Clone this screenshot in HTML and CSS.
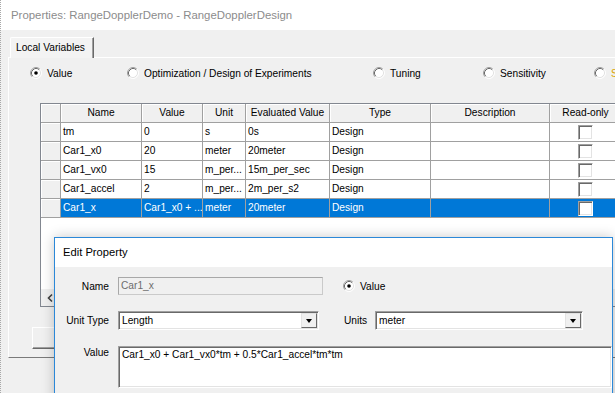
FILE: index.html
```html
<!DOCTYPE html>
<html>
<head>
<meta charset="utf-8">
<link rel="stylesheet" href="styles.css">
</head>
<body>
<div class="app">
  <div class="titlebar">Properties: RangeDopplerDemo - RangeDopplerDesign</div>
  <div class="tabstrip"><div class="tab">Local Variables</div></div>
  <div class="panel">
    <div class="radios">
      <div class="ropt"><svg class="radio" width="12" height="12" viewBox="0 0 12 12"><circle cx="6" cy="6" r="5" fill="#fff"/><path d="M2.11 9.89A5.5 5.5 0 0 1 9.89 2.11" fill="none" stroke="#a0a0a0"/><path d="M9.89 2.11A5.5 5.5 0 0 1 2.11 9.89" fill="none" stroke="#fff"/><path d="M2.82 9.18A4.5 4.5 0 0 1 9.18 2.82" fill="none" stroke="#696969"/><path d="M9.18 2.82A4.5 4.5 0 0 1 2.82 9.18" fill="none" stroke="#e3e3e3"/><circle cx="6" cy="6" r="1.8" fill="#000"/></svg><span>Value</span></div>
      <div class="ropt"><svg class="radio" width="12" height="12" viewBox="0 0 12 12"><circle cx="6" cy="6" r="5" fill="#fff"/><path d="M2.11 9.89A5.5 5.5 0 0 1 9.89 2.11" fill="none" stroke="#a0a0a0"/><path d="M9.89 2.11A5.5 5.5 0 0 1 2.11 9.89" fill="none" stroke="#fff"/><path d="M2.82 9.18A4.5 4.5 0 0 1 9.18 2.82" fill="none" stroke="#696969"/><path d="M9.18 2.82A4.5 4.5 0 0 1 2.82 9.18" fill="none" stroke="#e3e3e3"/></svg><span>Optimization / Design of Experiments</span></div>
      <div class="ropt"><svg class="radio" width="12" height="12" viewBox="0 0 12 12"><circle cx="6" cy="6" r="5" fill="#fff"/><path d="M2.11 9.89A5.5 5.5 0 0 1 9.89 2.11" fill="none" stroke="#a0a0a0"/><path d="M9.89 2.11A5.5 5.5 0 0 1 2.11 9.89" fill="none" stroke="#fff"/><path d="M2.82 9.18A4.5 4.5 0 0 1 9.18 2.82" fill="none" stroke="#696969"/><path d="M9.18 2.82A4.5 4.5 0 0 1 2.82 9.18" fill="none" stroke="#e3e3e3"/></svg><span>Tuning</span></div>
      <div class="ropt"><svg class="radio" width="12" height="12" viewBox="0 0 12 12"><circle cx="6" cy="6" r="5" fill="#fff"/><path d="M2.11 9.89A5.5 5.5 0 0 1 9.89 2.11" fill="none" stroke="#a0a0a0"/><path d="M9.89 2.11A5.5 5.5 0 0 1 2.11 9.89" fill="none" stroke="#fff"/><path d="M2.82 9.18A4.5 4.5 0 0 1 9.18 2.82" fill="none" stroke="#696969"/><path d="M9.18 2.82A4.5 4.5 0 0 1 2.82 9.18" fill="none" stroke="#e3e3e3"/></svg><span>Sensitivity</span></div>
      <div class="ropt"><svg class="radio" width="12" height="12" viewBox="0 0 12 12"><circle cx="6" cy="6" r="5" fill="#fff"/><path d="M2.11 9.89A5.5 5.5 0 0 1 9.89 2.11" fill="none" stroke="#a0a0a0"/><path d="M9.89 2.11A5.5 5.5 0 0 1 2.11 9.89" fill="none" stroke="#fff"/><path d="M2.82 9.18A4.5 4.5 0 0 1 9.18 2.82" fill="none" stroke="#696969"/><path d="M9.18 2.82A4.5 4.5 0 0 1 2.82 9.18" fill="none" stroke="#e3e3e3"/></svg><span class="orange">Statistical</span></div>
    </div>

    <div class="grid">
      <div class="row head">
        <div class="c rh"></div>
        <div class="c">Name</div>
        <div class="c">Value</div>
        <div class="c">Unit</div>
        <div class="c">Evaluated Value</div>
        <div class="c">Type</div>
        <div class="c">Description</div>
        <div class="c">Read-only</div>
      </div>
      <div class="row">
        <div class="c rh"></div>
        <div class="c">tm</div>
        <div class="c">0</div>
        <div class="c">s</div>
        <div class="c">0s</div>
        <div class="c">Design</div>
        <div class="c"></div>
        <div class="c ck"><div class="box"></div></div>
      </div>
      <div class="row">
        <div class="c rh"></div>
        <div class="c">Car1_x0</div>
        <div class="c">20</div>
        <div class="c">meter</div>
        <div class="c">20meter</div>
        <div class="c">Design</div>
        <div class="c"></div>
        <div class="c ck"><div class="box"></div></div>
      </div>
      <div class="row">
        <div class="c rh"></div>
        <div class="c">Car1_vx0</div>
        <div class="c">15</div>
        <div class="c">m_per...</div>
        <div class="c">15m_per_sec</div>
        <div class="c">Design</div>
        <div class="c"></div>
        <div class="c ck"><div class="box"></div></div>
      </div>
      <div class="row">
        <div class="c rh"></div>
        <div class="c">Car1_accel</div>
        <div class="c">2</div>
        <div class="c">m_per...</div>
        <div class="c">2m_per_s2</div>
        <div class="c">Design</div>
        <div class="c"></div>
        <div class="c ck"><div class="box"></div></div>
      </div>
      <div class="row sel">
        <div class="c rh"></div>
        <div class="c">Car1_x</div>
        <div class="c">Car1_x0 + ...</div>
        <div class="c">meter</div>
        <div class="c">20meter</div>
        <div class="c">Design</div>
        <div class="c"></div>
        <div class="c ck"><div class="box"></div></div>
      </div>
      <div class="empty"></div>
      <div class="hscroll">
        <div class="sbtn"><svg width="8" height="10" viewBox="0 0 8 10"><path d="M6 1.5L2.5 5L6 8.5" fill="none" stroke="#404040" stroke-width="1.6"/></svg></div>
      </div>
    </div>

    <div class="btn"></div>
  </div>

  <div class="dialog">
    <div class="dtitle">Edit Property</div>
    <div class="dbody">
      <div class="drow">
        <div class="dl">Name</div>
        <div class="name-input">Car1_x</div>
        <div class="dradio"><svg class="radio" width="12" height="12" viewBox="0 0 12 12"><circle cx="6" cy="6" r="5" fill="#fff"/><path d="M2.11 9.89A5.5 5.5 0 0 1 9.89 2.11" fill="none" stroke="#a0a0a0"/><path d="M9.89 2.11A5.5 5.5 0 0 1 2.11 9.89" fill="none" stroke="#fff"/><path d="M2.82 9.18A4.5 4.5 0 0 1 9.18 2.82" fill="none" stroke="#696969"/><path d="M9.18 2.82A4.5 4.5 0 0 1 2.82 9.18" fill="none" stroke="#e3e3e3"/><circle cx="6" cy="6" r="1.8" fill="#000"/></svg><span>Value</span></div>
      </div>
      <div class="drow r2">
        <div class="dl">Unit Type</div>
        <div class="combo unit-type"><div class="txt">Length</div><div class="dd"><div class="tri"></div></div></div>
        <div class="units-label">Units</div>
        <div class="combo units"><div class="txt">meter</div><div class="dd"><div class="tri"></div></div></div>
      </div>
      <div class="drow r3">
        <div class="dl">Value</div>
        <div class="ta">Car1_x0 + Car1_vx0*tm + 0.5*Car1_accel*tm*tm</div>
      </div>
    </div>
  </div>
</div>
</body>
</html>
```
FILE: styles.css
```css
* { box-sizing: border-box; }
body {
  margin: 0;
  font-family: "Liberation Sans", Arial, sans-serif;
  font-size: 10.2px;
  color: #000;
}
.app {
  position: relative;
  width: 615px;
  height: 393px;
  overflow: hidden;
  background: repeating-linear-gradient(to bottom, #a8a8a8 0 1px, transparent 1px 2px) left top / 1px 100% no-repeat, #f0f0f0;
}
.titlebar {
  height: 30px;
  background: repeating-linear-gradient(to bottom, #a8a8a8 0 1px, transparent 1px 2px) left top / 1px 100% no-repeat, #fff;
  color: #8c8c8c;
  font-size: 11.4px;
  line-height: 30px;
  padding-left: 11px;
  white-space: nowrap;
}
.tabstrip {
  height: 27px;
  padding: 7px 0 0 10px;
}
.tab {
  position: relative;
  z-index: 1;
  width: 84px;
  height: 21px;
  margin-bottom: -1px;
  background: #f3f3f3;
  border-top: 1px solid #fff;
  border-left: 1px solid #fff;
  border-right: 1px solid #696969;
  box-shadow: inset -1px 0 #a0a0a0;
  border-top-left-radius: 2px;
  padding-left: 5px;
  line-height: 19px;
  white-space: nowrap;
}
.panel {
  margin-left: 8px;
  height: 301px;
  border-top: 1px solid #fff;
  border-left: 1px solid #fff;
  border-bottom: 1px solid #7a7a7a;
  padding-top: 7px;
}
.radios {
  display: grid;
  grid-template-columns: 97px 246px 110px 111px 100px;
  height: 16px;
  margin-left: 21px;
  align-items: center;
}
.ropt {
  display: flex;
  align-items: center;
  gap: 5px;
  white-space: nowrap;
}
.radio { flex: none; display: block; }
.orange { color: #d9a300; }

.grid {
  margin: 22px 0 0 31px;
  width: 620px;
  height: 204px;
  border: 1px solid #828790;
  background: #fff;
  display: flex;
  flex-direction: column;
}
.row {
  display: grid;
  grid-template-columns: 20px 81px 61px 43px 84px 101px 119px 72px;
  height: 19px;
  flex: none;
}
.c {
  border-right: 1px solid #a0a0a0;
  border-bottom: 1px solid #a0a0a0;
  padding-left: 2px;
  line-height: 18px;
  white-space: nowrap;
  overflow: hidden;
}
.rh {
  background: #f0f0f0;
  box-shadow: inset 1px 1px #fff;
}
.head .c {
  background: #f0f0f0;
  text-align: center;
  padding-left: 0;
  box-shadow: inset 1px 1px #fff;
}
.sel .c:not(.rh) {
  background: #0078d7;
  color: #fff;
}
.ck {
  display: flex;
  align-items: center;
  justify-content: center;
  padding-left: 0;
}
.box {
  width: 15px;
  height: 15px;
  background: #fff;
  border-style: solid;
  border-width: 1px;
  border-color: #a0a0a0 #fff #fff #a0a0a0;
  box-shadow: inset 1px 1px #696969, inset -1px -1px #e3e3e3;
}
.empty { flex: 1; }
.hscroll {
  height: 17px;
  flex: none;
  background: #f0f0f0;
  display: flex;
}
.sbtn {
  width: 17px;
  height: 17px;
  display: flex;
  align-items: center;
  justify-content: center;
}
.btn {
  margin: 20px 0 0 23px;
  width: 120px;
  height: 22px;
  background: #f0f0f0;
  border: 1px solid;
  border-color: #fff #696969 #696969 #fff;
  box-shadow: inset -1px -1px #a0a0a0;
}

.dialog {
  position: absolute;
  left: 54px;
  top: 237px;
  width: 559px;
  height: 170px;
  background: #f0f0f0;
  border: 1px solid #2b88d8;
  box-shadow: 0 0 12px rgba(0, 0, 0, 0.22);
}
.dtitle {
  height: 29px;
  background: #fff;
  padding-left: 8px;
  line-height: 29px;
  font-size: 11.2px;
}
.dbody { padding-top: 10px; }
.drow {
  display: flex;
  align-items: center;
}
.dl {
  width: 54px;
  margin-right: 9px;
  text-align: right;
  white-space: nowrap;
  flex: none;
}
.name-input {
  width: 205px;
  height: 18px;
  border: 1px solid #cacaca;
  border-top-color: #a8a8a8;
  border-left-color: #a8a8a8;
  background: #f0f0f0;
  color: #6d6d6d;
  padding-left: 2px;
  line-height: 16px;
}
.dradio {
  margin-left: 20px;
  display: flex;
  align-items: center;
  gap: 5px;
}
.r2 { margin-top: 16px; }
.combo {
  display: flex;
  height: 19px;
  background: #fff;
  border-style: solid;
  border-width: 1px;
  border-color: #a0a0a0 #fff #fff #a0a0a0;
  box-shadow: inset 1px 1px #696969, inset -1px -1px #e3e3e3;
  padding: 1px;
}
.unit-type { width: 201px; }
.units { width: 208px; }
.combo .txt {
  flex: 1;
  padding-left: 2px;
  line-height: 15px;
}
.dd {
  width: 16px;
  height: 15px;
  background: #f0f0f0;
  border: 1px solid;
  border-color: #e3e3e3 #696969 #696969 #e3e3e3;
  display: flex;
  align-items: center;
  justify-content: center;
}
.tri {
  width: 0;
  height: 0;
  border-left: 3.5px solid transparent;
  border-right: 3.5px solid transparent;
  border-top: 4px solid #000;
}
.units-label {
  width: 24px;
  margin-left: 25px;
  margin-right: 7px;
}
.r3 {
  margin-top: 16px;
  align-items: flex-start;
}
.r3 .dl { padding-top: 1px; }
.ta {
  flex: 1;
  height: 42px;
  background: #fff;
  border-style: solid;
  border-width: 1px;
  border-color: #a0a0a0 #fff #fff #a0a0a0;
  box-shadow: inset 1px 1px #696969, inset -1px -1px #e3e3e3;
  padding: 1px 3px;
  line-height: 14px;
  white-space: nowrap;
}
```
